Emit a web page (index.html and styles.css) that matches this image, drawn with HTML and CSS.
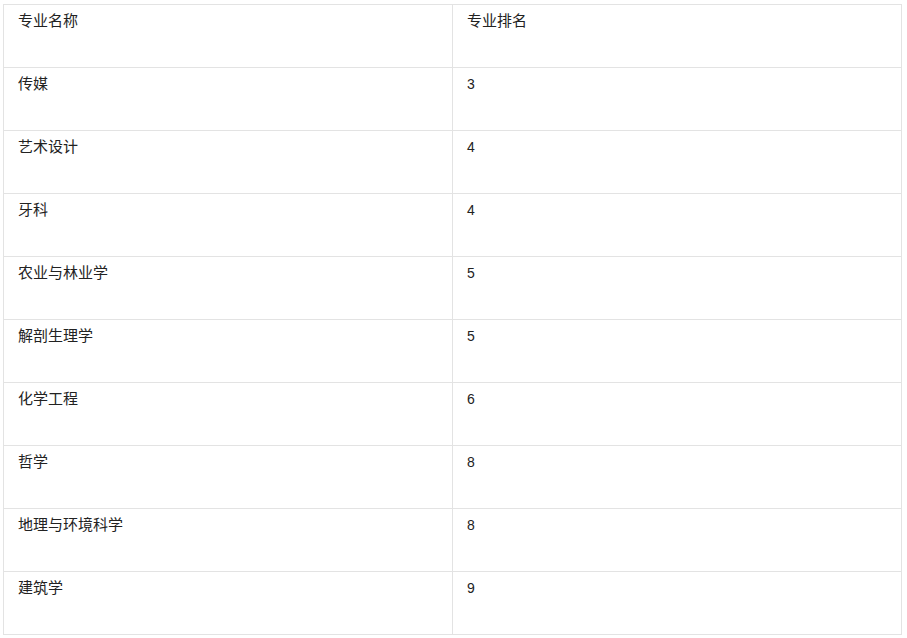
FILE: index.html
```html
<!DOCTYPE html>
<html lang="zh">
<head>
<meta charset="utf-8">
<link rel="stylesheet" href="styles.css">
</head>
<body>
<table class="rank">
<tr><td class="c1">专业名称</td><td class="zh">专业排名</td></tr>
<tr><td class="c1">传媒</td><td>3</td></tr>
<tr><td class="c1">艺术设计</td><td>4</td></tr>
<tr><td class="c1">牙科</td><td>4</td></tr>
<tr><td class="c1">农业与林业学</td><td>5</td></tr>
<tr><td class="c1">解剖生理学</td><td>5</td></tr>
<tr><td class="c1">化学工程</td><td>6</td></tr>
<tr><td class="c1">哲学</td><td>8</td></tr>
<tr><td class="c1">地理与环境科学</td><td>8</td></tr>
<tr><td class="c1">建筑学</td><td>9</td></tr>
</table>
</body>
</html>
```
FILE: styles.css
```css
html, body {
  margin: 0;
  padding: 0;
  background: #fff;
}
body {
  padding: 4px 0 0 3px;
  font-family: "Liberation Sans", Arial, "Noto Sans CJK SC", sans-serif;
  font-size: 14px;
  color: #222;
}
.rank {
  border-collapse: collapse;
  width: 899px;
}
.rank tr {
  height: 63px;
}
.rank td {
  border: 1px solid #e3e3e3;
  vertical-align: top;
  padding: 6px 14px 8px;
  line-height: 20px;
}
.rank .c1 {
  width: 420px;
  font-size: 15px;
}
.rank .zh {
  font-size: 15px;
}
```
